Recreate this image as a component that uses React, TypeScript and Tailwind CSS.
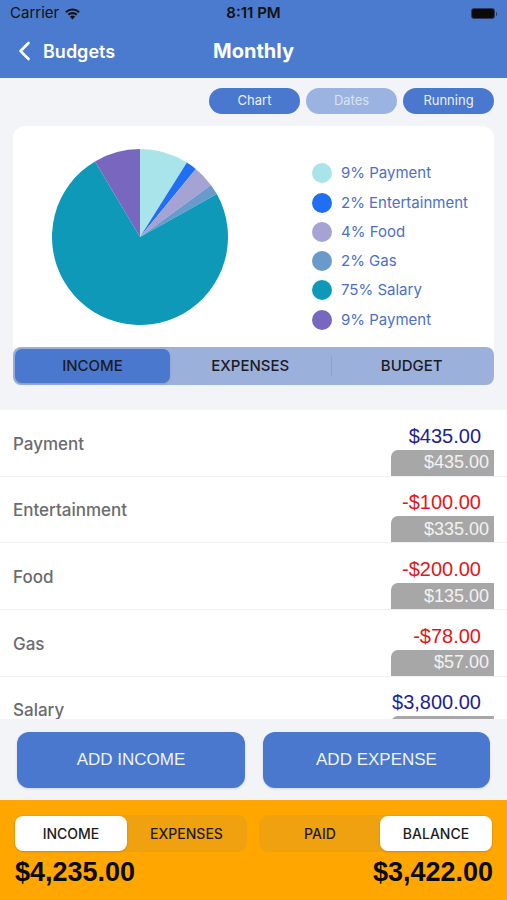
import React from "react";

const slices = [
  { pct: 9, label: "9% Payment", color: "#A9E4EB" },
  { pct: 2, label: "2% Entertainment", color: "#1F6EF4" },
  { pct: 4, label: "4% Food", color: "#A4A3D3" },
  { pct: 2, label: "2% Gas", color: "#6A9ACB" },
  { pct: 75, label: "75% Salary", color: "#0E99B8" },
  { pct: 8.6, label: "9% Payment", color: "#7767BF" },
];

const rows = [
  { name: "Payment", amount: "$435.00", neg: false, bal: "$435.00" },
  { name: "Entertainment", amount: "-$100.00", neg: true, bal: "$335.00" },
  { name: "Food", amount: "-$200.00", neg: true, bal: "$135.00" },
  { name: "Gas", amount: "-$78.00", neg: true, bal: "$57.00" },
  { name: "Salary", amount: "$3,800.00", neg: false, bal: "" },
];

function Pie() {
  const total = slices.reduce((s, x) => s + x.pct, 0);
  const r = 88;
  const c = 90;
  let acc = 0;
  return (
    <svg width="180" height="180" viewBox="0 0 180 180">
      {slices.map((s, i) => {
        const a0 = (acc / total) * Math.PI * 2;
        acc += s.pct;
        const a1 = (acc / total) * Math.PI * 2;
        const x0 = c + r * Math.sin(a0);
        const y0 = c - r * Math.cos(a0);
        const x1 = c + r * Math.sin(a1);
        const y1 = c - r * Math.cos(a1);
        const large = a1 - a0 > Math.PI ? 1 : 0;
        return (
          <path
            key={i}
            d={`M${c} ${c} L${x0} ${y0} A${r} ${r} 0 ${large} 1 ${x1} ${y1} Z`}
            fill={s.color}
          />
        );
      })}
    </svg>
  );
}

function StatusBar() {
  return (
    <div className="relative flex h-[27px] items-center px-[10px] text-[15px] text-[#111]">
      <div className="flex items-center gap-[5px]">
        <span>Carrier</span>
        <svg width="17" height="13" viewBox="0 0 17 13">
          <path d="M8.5 12.5 L5.9 9.6 A3.8 3.8 0 0 1 11.1 9.6 Z" fill="#111" />
          <path d="M3.6 7.1 A7 7 0 0 1 13.4 7.1 L12 8.6 A5 5 0 0 0 5 8.6 Z" fill="#111" />
          <path d="M1.2 4.5 A10.5 10.5 0 0 1 15.8 4.5 L14.4 6 A8.5 8.5 0 0 0 2.6 6 Z" fill="#111" />
        </svg>
      </div>
      <div className="absolute left-0 right-0 text-center font-semibold">8:11 PM</div>
      <div className="ml-auto flex items-center">
        <div className="h-[11px] w-[24px] rounded-[3px] border border-[#2a3a60] bg-[#0a0a0a]" />
        <div className="ml-[1px] h-[4px] w-[1.5px] rounded-r bg-[#2a3a60]" />
      </div>
    </div>
  );
}

export default function App() {
  return (
    <div
      className="flex h-[900px] w-[507px] flex-col overflow-hidden bg-[#F2F4F8]"
      style={{ fontFamily: "Inter, 'Liberation Sans', sans-serif" }}
    >
      {/* header */}
      <div className="h-[78px] bg-[#4A7BCF]">
        <StatusBar />
        <div className="relative flex h-[49px] items-center pb-[1px]">
          <div className="flex items-center pl-[18px] text-white">
            <svg width="13" height="20" viewBox="0 0 13 20">
              <path d="M10.5 2 L2.5 10 L10.5 18" stroke="white" strokeWidth="2.6" fill="none" strokeLinecap="round" strokeLinejoin="round" />
            </svg>
            <span className="ml-[12px] text-[18px] font-semibold">Budgets</span>
          </div>
          <div className="absolute left-0 right-0 pointer-events-none text-center text-[20px] font-bold text-white">
            Monthly
          </div>
        </div>
      </div>

      {/* toggles */}
      <div className="flex justify-end gap-[6px] pr-[13px] pt-[10px]">
        <div className="flex h-[26px] w-[91px] items-center justify-center rounded-full bg-[#4A78CF] text-[13px] text-[#EAF0FB]">Chart</div>
        <div className="flex h-[26px] w-[91px] items-center justify-center rounded-full bg-[#9AB3E1] text-[13px] text-[#D8E3F6]">Dates</div>
        <div className="flex h-[26px] w-[91px] items-center justify-center rounded-full bg-[#4A78CF] text-[13px] text-[#EAF0FB]">Running</div>
      </div>

      {/* chart card */}
      <div className="mx-[13px] mt-[12px] flex h-[259px] flex-col rounded-[12px] bg-white">
        <div className="flex flex-1 items-center">
          <div className="ml-[37px]">
            <Pie />
          </div>
          <div className="ml-[82px] flex flex-col gap-[9.3px] pt-[20px]">
            {slices.map((s, i) => (
              <div key={i} className="flex items-center gap-[9px]">
                <div className="h-[20px] w-[20px] rounded-full" style={{ backgroundColor: s.color }} />
                <span className="text-[15px] leading-[20px] text-[#4C70C7]">{s.label}</span>
              </div>
            ))}
          </div>
        </div>
        <div className="flex h-[38px] rounded-[8px] bg-[#9BB1DC] p-[2px] text-[15px] font-medium text-[#1c1c1e]">
          <div className="flex w-[155px] items-center justify-center rounded-[7px] bg-[#4A78CF] shadow">INCOME</div>
          <div className="flex flex-1 items-center justify-center">EXPENSES</div>
          <div className="my-[7px] w-px bg-[#8AA2D2]" />
          <div className="flex flex-1 items-center justify-center">BUDGET</div>
        </div>
      </div>

      {/* list */}
      <div className="mt-[25px] h-[309px] overflow-hidden bg-white">
        {rows.map((r) => (
          <div key={r.name} className="flex h-[66.7px] border-b border-[#EEF0F4] pl-[13px] pr-[13px]">
            <div className="flex items-center pt-[3px] text-[17px] font-medium text-[#6B6B6E]">{r.name}</div>
            <div className="ml-auto flex flex-col items-end justify-end" style={{ fontFamily: "'Liberation Sans', Arial, sans-serif" }}>
              <div className={`pr-[13px] text-[20px] leading-[24px] ${r.neg ? "text-[#E8151B]" : "text-[#1E1E96]"}`}>{r.amount}</div>
              <div className="mt-[2px] flex h-[26px] w-[103px] items-center justify-end rounded-tl-[7px] bg-[#A7A7A7] pr-[5px] text-[18px] text-[#F2F2F2]">
                {r.bal}
              </div>
            </div>
          </div>
        ))}
      </div>

      {/* add buttons */}
      <div className="flex h-[81px] gap-[18px] px-[17px] pt-[13px]" style={{ fontFamily: "'Liberation Sans', Arial, sans-serif" }}>
        <div className="flex h-[56px] w-[228px] items-center justify-center rounded-[12px] bg-[#4A78CF] text-[17px] text-[#EEF3FC] shadow-sm">ADD INCOME</div>
        <div className="flex h-[56px] w-[227px] items-center justify-center rounded-[12px] bg-[#4A78CF] text-[17px] text-[#EEF3FC] shadow-sm">ADD EXPENSE</div>
      </div>

      {/* footer */}
      <div className="flex-1 bg-[#FFA600] px-[14px] pt-[15px]">
        <div className="flex justify-between">
          <div className="flex h-[37px] w-[233px] rounded-[9px] bg-[#EFA10F] p-[1px] text-[14px] font-medium text-[#1c1c1e]">
            <div className="flex w-[112px] items-center justify-center rounded-[8px] bg-white shadow">INCOME</div>
            <div className="flex flex-1 items-center justify-center">EXPENSES</div>
          </div>
          <div className="flex h-[37px] w-[234px] rounded-[9px] bg-[#EFA10F] p-[1px] text-[14px] font-medium text-[#1c1c1e]">
            <div className="flex flex-1 items-center justify-center">PAID</div>
            <div className="flex w-[112px] items-center justify-center rounded-[8px] bg-white shadow">BALANCE</div>
          </div>
        </div>
        <div className="mt-[2px] flex justify-between text-[27px] font-bold leading-[36px] text-[#0b0b0b]" style={{ fontFamily: "'Liberation Sans', Arial, sans-serif" }}>
          <span className="pl-[1px]">$4,235.00</span>
          <span>$3,422.00</span>
        </div>
      </div>
    </div>
  );
}
